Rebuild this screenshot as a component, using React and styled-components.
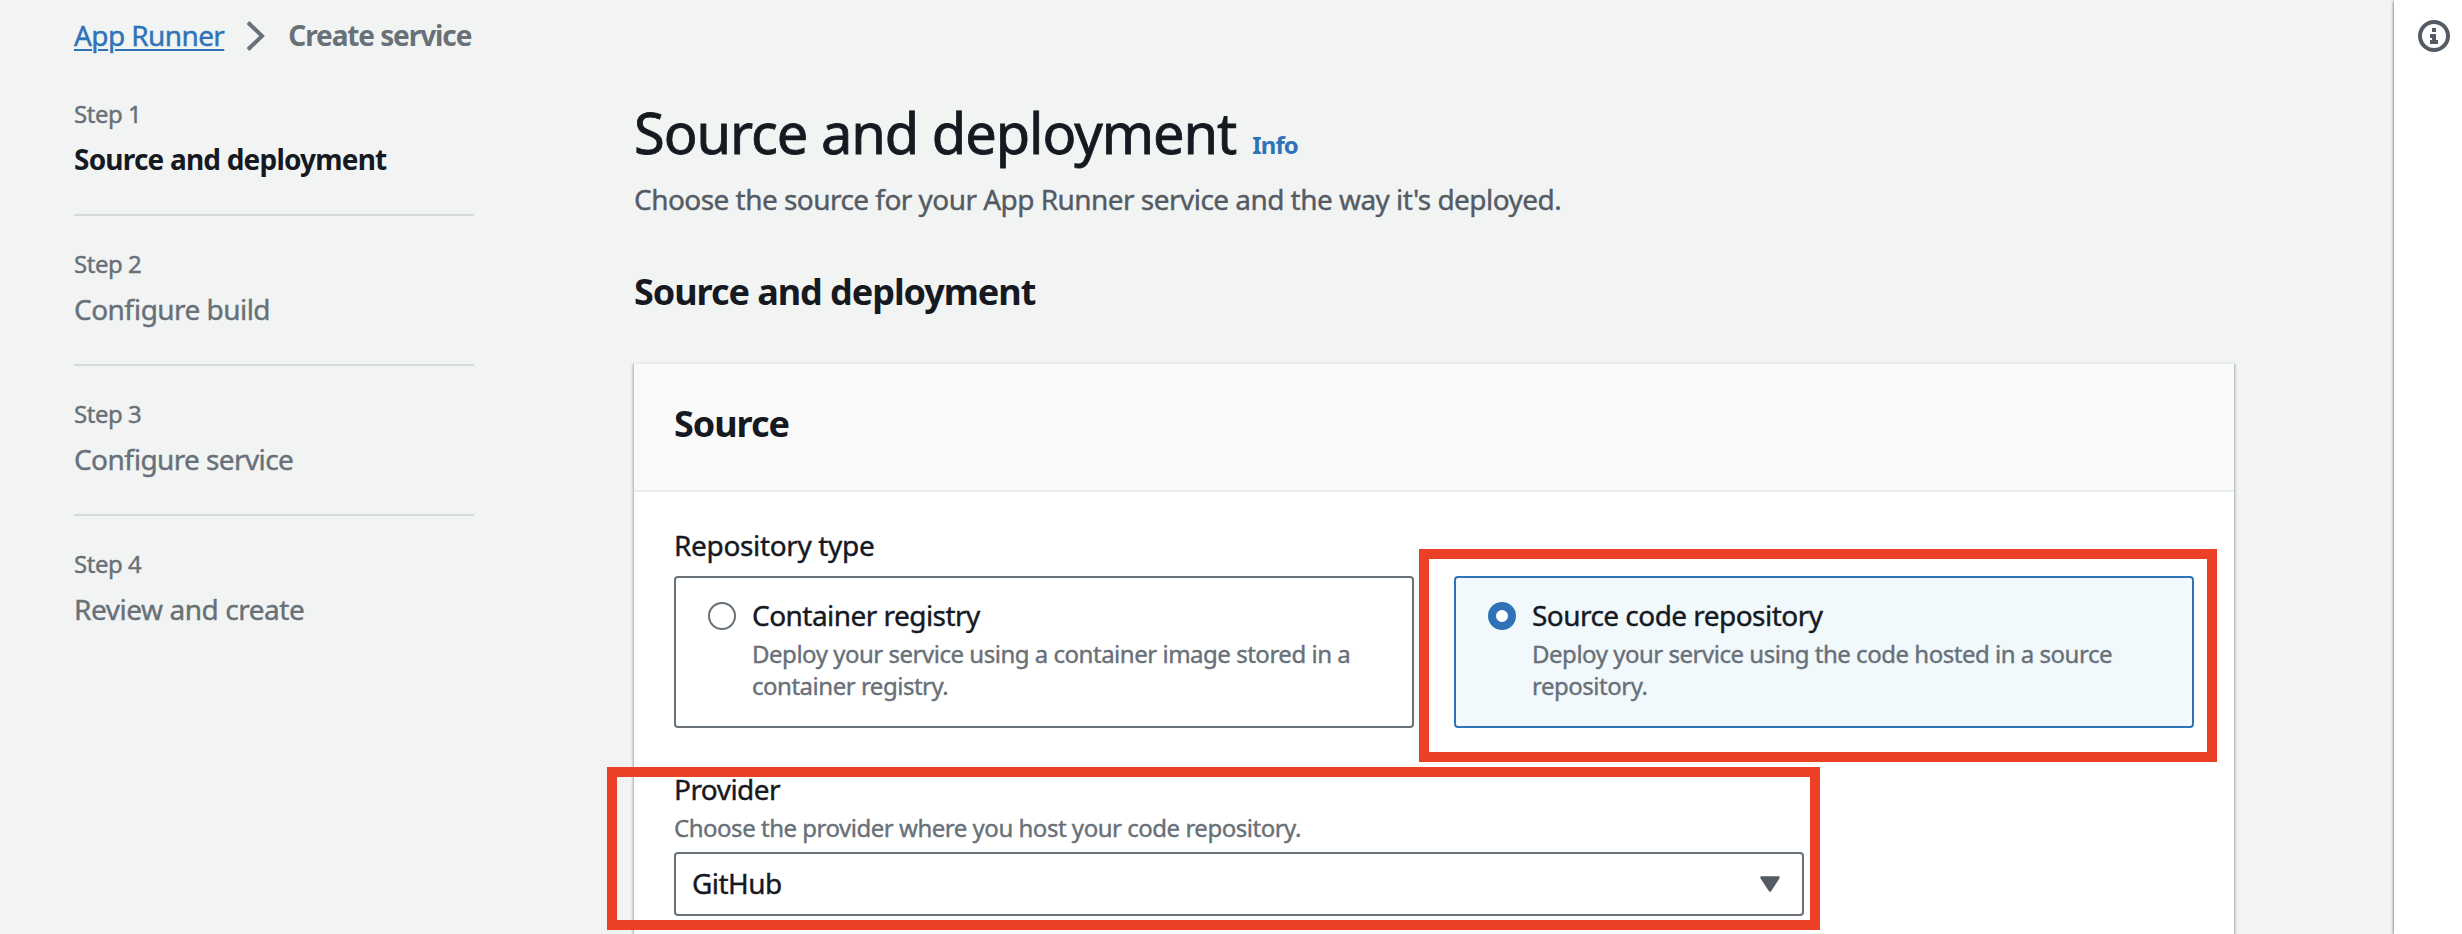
import React from "react";
import styled, { createGlobalStyle, css } from "styled-components";

const color = {
  page: "#f2f4f4",
  ink: "#16191f",
  body: "#545b64",
  muted: "#687078",
  link: "#2e73b8",
  line: "#d5dbdb",
  headerLine: "#eaeded",
  highlight: "#eb4025",
};

const GlobalStyle = createGlobalStyle`
  *, *::before, *::after { box-sizing: border-box; }
  html, body { margin: 0; padding: 0; background: ${color.page}; }
  body {
    font-family: "Noto Sans", "Open Sans", sans-serif;
    font-feature-settings: "liga" 1;
    -webkit-text-stroke: 0.4px currentColor;
    color: ${color.ink};
    overflow: hidden;
  }
  h1, h2, h3, p, ol { margin: 0; padding: 0; }
`;

const bodyText = css`
  font-size: 28px;
  line-height: 40px;
  letter-spacing: ${(p) => p.$track ?? -0.54}px;
`;

const smallText = css`
  font-size: 24px;
  line-height: 32px;
  letter-spacing: ${(p) => p.$track ?? -0.48}px;
  color: ${color.muted};
`;

const boldText = css`
  font-weight: 700;
  -webkit-text-stroke-width: 0;
`;

const Page = styled.div`
  display: flex;
  height: 934px;
  overflow: hidden;
`;

const Content = styled.div`
  flex: 1;
  min-width: 0;
  padding: 14px 0 0 74px;
`;

const Breadcrumbs = styled.nav`
  display: flex;
  align-items: center;
  height: 42px;
`;

const CrumbLink = styled.a`
  ${bodyText}
  color: ${color.link};
  text-decoration: underline;
  text-decoration-thickness: 2px;
  text-underline-offset: 3px;
`;

const CrumbIcon = styled.svg`
  width: 20px;
  height: 32px;
  margin: 2px 22px 0 22px;
`;

const CrumbCurrent = styled.span`
  ${bodyText}
  ${boldText}
  color: ${color.muted};
`;

const Columns = styled.div`
  display: flex;
  gap: 160px;
  padding-top: 40px;
`;

const Steps = styled.ol`
  width: 400px;
  list-style: none;
  padding-top: 2px;
`;

const Step = styled.li`
  padding-bottom: 33px;

  & + & {
    border-top: 2px solid ${color.line};
    padding-top: 32px;
  }
`;

const StepLabel = styled.div`
  ${smallText}
  margin-bottom: 7px;
`;

const StepTitle = styled.div`
  ${bodyText}
  line-height: 44px;
  color: ${color.muted};
  ${(p) => p.$active && boldText}
  ${(p) => p.$active && `color: ${color.ink};`}
`;

const Main = styled.main`
  width: 1600px;
`;

const TitleRow = styled.div`
  display: flex;
  align-items: baseline;
  gap: 16px;
`;

const Title = styled.h1`
  font-size: 56px;
  line-height: 72px;
  font-weight: 400;
  letter-spacing: -1.05px;
  -webkit-text-stroke-width: 0.8px;
`;

const InfoLink = styled.a`
  ${boldText}
  font-size: 24px;
  letter-spacing: -0.9px;
  color: ${color.link};
`;

const Lead = styled.p`
  ${bodyText}
  margin-top: 11px;
  color: ${color.body};
`;

const Heading = styled.h2`
  ${boldText}
  font-size: 36px;
  line-height: 44px;
  letter-spacing: ${(p) => p.$track ?? -1.05}px;
`;

const SectionHeading = styled(Heading)`
  margin: 51px 0 48px;
`;

const Card = styled.section`
  height: 640px;
  background: #fff;
  border-top: 2px solid ${color.headerLine};
  box-shadow:
    0 2px 2px 0 rgba(0, 28, 36, 0.3),
    2px 2px 2px 0 rgba(0, 28, 36, 0.15),
    -2px 2px 2px 0 rgba(0, 28, 36, 0.15);
`;

const CardHeader = styled.header`
  height: 128px;
  padding: 38px 40px 0;
  background: #fafafa;
  border-bottom: 2px solid ${color.headerLine};
`;

const CardBody = styled.div`
  padding: 33px 40px 0;
`;

const FieldLabel = styled.div`
  ${bodyText}
`;

const FieldHint = styled.div`
  ${smallText}
  margin-top: 3px;
`;

const Tiles = styled.div`
  display: grid;
  grid-template-columns: 1fr 1fr;
  gap: 40px;
  margin: 11px 0 41px;
`;

const TileSlot = styled.div`
  position: relative;
`;

const Tile = styled.div`
  display: flex;
  gap: 16px;
  height: 152px;
  padding: 17px 32px;
  border: 2px solid ${(p) => (p.$selected ? color.link : color.muted)};
  border-radius: 4px;
  background: ${(p) => (p.$selected ? "#f2f9fd" : "#fff")};
`;

const Radio = styled.span`
  flex: none;
  width: 28px;
  height: 28px;
  margin-top: 7px;
  border: ${(p) => (p.$selected ? `8px solid ${color.link}` : `2px solid ${color.muted}`)};
  border-radius: 50%;
  background: #fff;
`;

const TileHint = styled.div`
  ${smallText}
  margin-top: 3px;
`;

const Field = styled.div`
  position: relative;
  width: 1130px;
`;

const Select = styled.div`
  ${bodyText}
  display: flex;
  align-items: center;
  justify-content: space-between;
  height: 64px;
  margin-top: 8px;
  padding: 0 22px 2px 16px;
  border: 2px solid ${color.muted};
  border-radius: 4px;
  background: #fff;
`;

const Caret = styled.svg`
  width: 20px;
  height: 16px;
  margin-top: 2px;
`;

const Highlight = styled.div`
  position: absolute;
  border: 10px solid ${color.highlight};
  pointer-events: none;
`;

const TileHighlight = styled(Highlight)`
  inset: -27px -23px -34px -35px;
`;

const FieldHighlight = styled(Highlight)`
  inset: -2px -16px -14px -67px;
`;

const HelpRail = styled.aside`
  width: 68px;
  padding: 20px 0 0 24px;
  background: #fff;
  box-shadow:
    0 2px 2px 0 rgba(0, 28, 36, 0.3),
    -2px 2px 2px 0 rgba(0, 28, 36, 0.15),
    0 -2px 2px 0 rgba(0, 28, 36, 0.3);
`;

const HelpIcon = styled.svg`
  display: block;
  width: 32px;
  height: 32px;
`;

const steps = [
  { title: "Source and deployment", active: true, track: -0.8 },
  { title: "Configure build" },
  { title: "Configure service", track: -0.6 },
  { title: "Review and create", track: -0.45 },
];

const repositoryTypes = [
  {
    title: "Container registry",
    hint: "Deploy your service using a container image stored in a container registry.",
  },
  {
    title: "Source code repository",
    hint: "Deploy your service using the code hosted in a source repository.",
    selected: true,
  },
];

export default function App() {
  return (
    <>
      <GlobalStyle />
      <Page>
        <Content>
          <Breadcrumbs>
            <CrumbLink $track={-0.6}>App Runner</CrumbLink>
            <CrumbIcon viewBox="0 0 20 32" fill="none">
              <path d="M2 2.5 L16 16 L2 29.5" stroke={color.muted} strokeWidth="4" />
            </CrumbIcon>
            <CrumbCurrent $track={-1.1}>Create service</CrumbCurrent>
          </Breadcrumbs>
          <Columns>
            <Steps>
              {steps.map((step, i) => (
                <Step key={step.title}>
                  <StepLabel>Step {i + 1}</StepLabel>
                  <StepTitle $active={step.active} $track={step.track}>
                    {step.title}
                  </StepTitle>
                </Step>
              ))}
            </Steps>
            <Main>
              <TitleRow>
                <Title>Source and deployment</Title>
                <InfoLink>Info</InfoLink>
              </TitleRow>
              <Lead>Choose the source for your App Runner service and the way it's deployed.</Lead>
              <SectionHeading>Source and deployment</SectionHeading>
              <Card>
                <CardHeader>
                  <Heading>Source</Heading>
                </CardHeader>
                <CardBody>
                  <FieldLabel $track={-0.35}>Repository type</FieldLabel>
                  <Tiles>
                    {repositoryTypes.map((type) => (
                      <TileSlot key={type.title}>
                        <Tile $selected={type.selected}>
                          <Radio $selected={type.selected} />
                          <div>
                            <FieldLabel>{type.title}</FieldLabel>
                            <TileHint>{type.hint}</TileHint>
                          </div>
                        </Tile>
                        {type.selected && <TileHighlight />}
                      </TileSlot>
                    ))}
                  </Tiles>
                  <Field>
                    <FieldLabel>Provider</FieldLabel>
                    <FieldHint>Choose the provider where you host your code repository.</FieldHint>
                    <Select>
                      GitHub
                      <Caret viewBox="0 0 20 16">
                        <path
                          d="M1.5 1.5 H18.5 L10 14.5 Z"
                          fill={color.body}
                          stroke={color.body}
                          strokeWidth="2.5"
                          strokeLinejoin="round"
                        />
                      </Caret>
                    </Select>
                    <FieldHighlight />
                  </Field>
                </CardBody>
              </Card>
            </Main>
          </Columns>
        </Content>
        <HelpRail>
          <HelpIcon viewBox="0 0 32 32">
            <circle cx="16" cy="16" r="14" fill="none" stroke={color.body} strokeWidth="4" />
            <path d="M14 8h4v4h-4z M12 14h6v6h2v4h-8v-4h2v-2h-2z" fill={color.body} />
          </HelpIcon>
        </HelpRail>
      </Page>
    </>
  );
}
